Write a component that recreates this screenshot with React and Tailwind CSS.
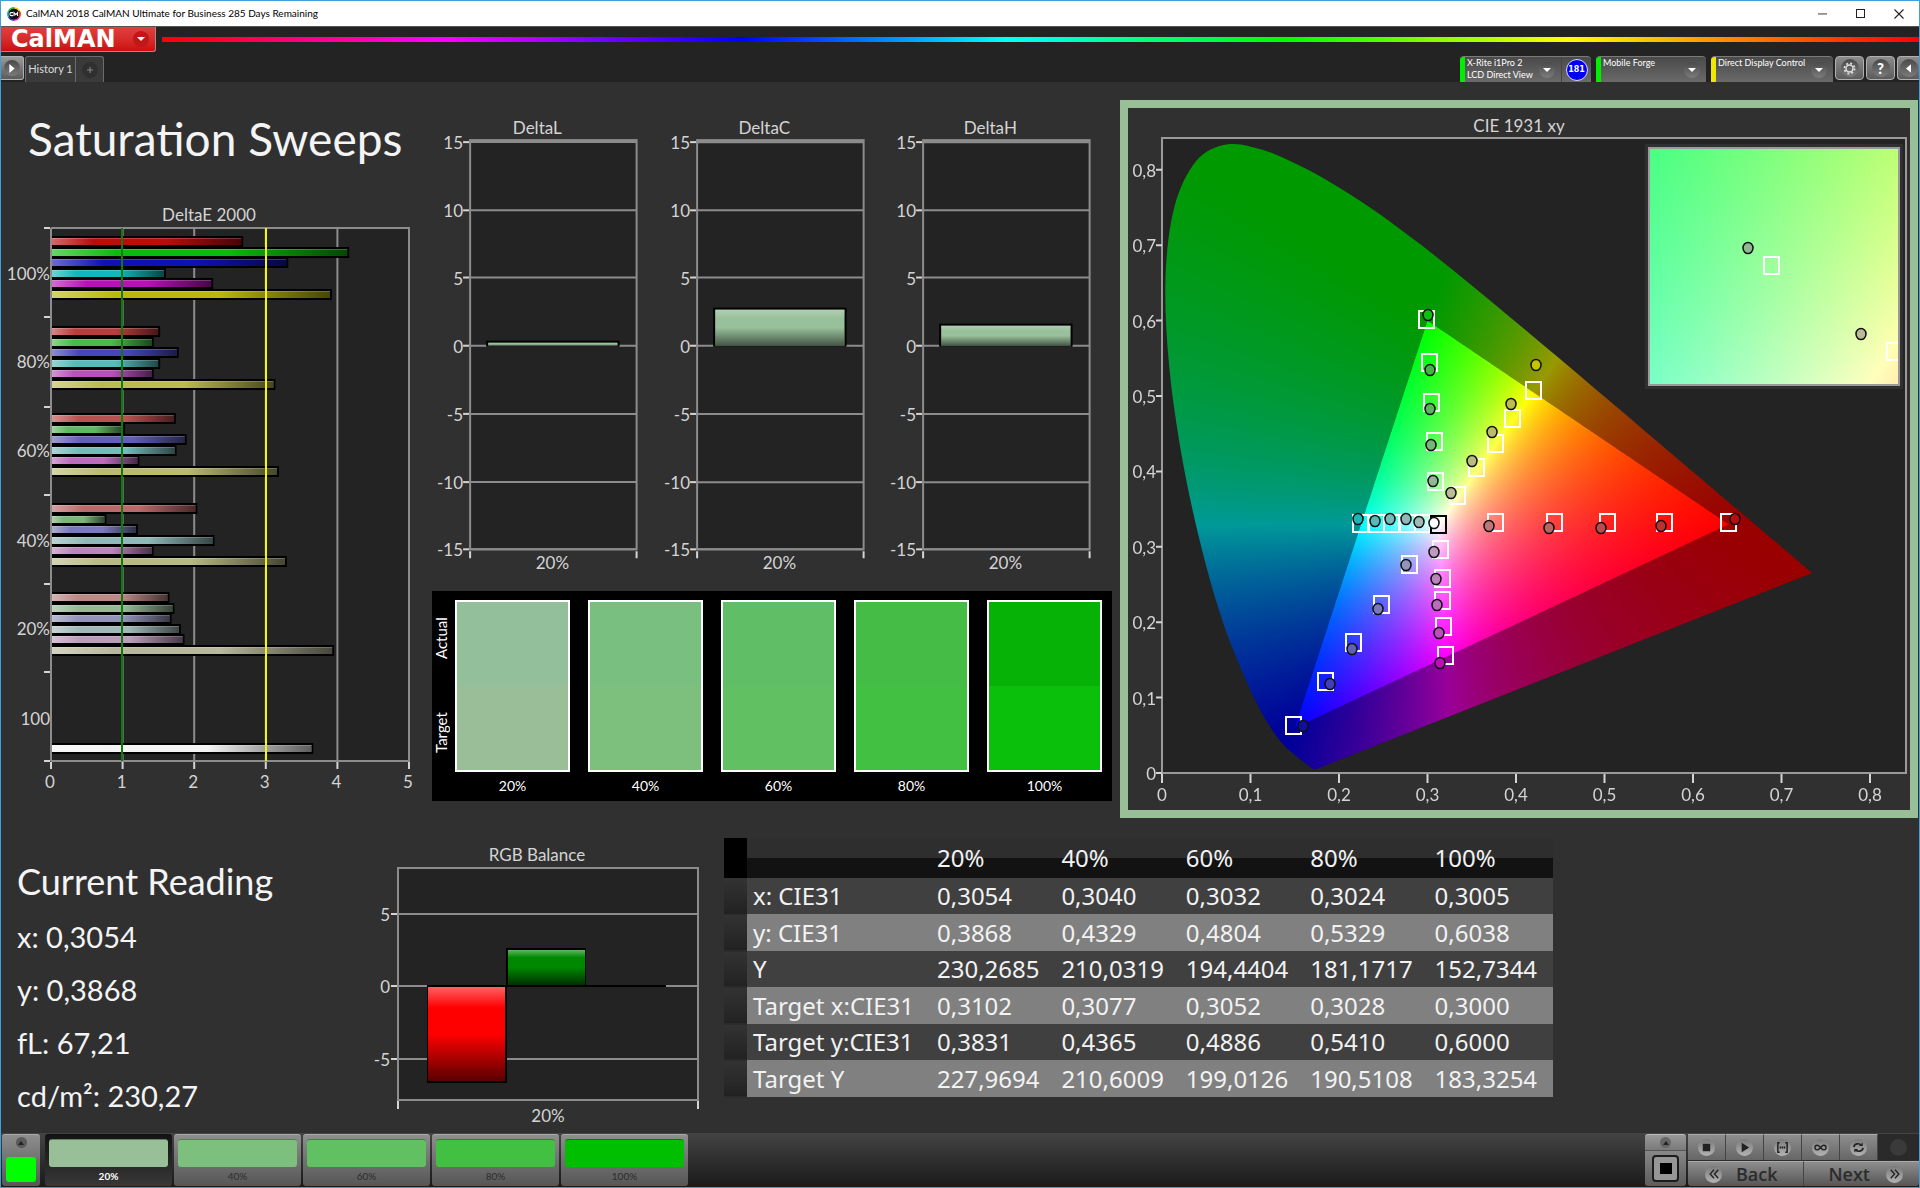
import { useEffect, useRef } from "react";

const LEVELS = ["20%", "40%", "60%", "80%", "100%"];

const DELTA_E = [
  { label: "100%", y: 41, labelY: 80, values: [2.67, 4.15, 3.3, 1.59, 2.25, 3.91], colors: ["#b90c0c", "#0db90d", "#1010b9", "#10b9b9", "#b910b9", "#b9b90c"] },
  { label: "80%", y: 131, labelY: 168, values: [1.51, 1.42, 1.77, 1.51, 1.42, 3.12], colors: ["#bb3c3c", "#48bb48", "#4646bb", "#54bbbb", "#bb50bb", "#bbbb50"] },
  { label: "60%", y: 218, labelY: 257, values: [1.73, 1.02, 1.88, 1.74, 1.22, 3.17], colors: ["#bb5050", "#62b862", "#6060b8", "#78baba", "#bb6cbb", "#bbbb70"] },
  { label: "40%", y: 308, labelY: 347, values: [2.03, 0.76, 1.2, 2.27, 1.42, 3.28], colors: ["#bb6a6a", "#7ab57a", "#7a7ab8", "#90b8b8", "#bb84bb", "#b9b984"] },
  { label: "20%", y: 397, labelY: 435, values: [1.64, 1.71, 1.67, 1.8, 1.85, 3.94], colors: ["#bc8888", "#96b896", "#9494bb", "#a2b8b8", "#bb9cbb", "#b8b89c"] },
  { label: "100", y: 548, labelY: 525, values: [3.65], colors: ["#f4f4f4"] },
];

const SWATCHES = [
  { level: "20%", actual: "#93c09a", target: "#9abe97" },
  { level: "40%", actual: "#79c080", target: "#7dc07d" },
  { level: "60%", actual: "#60bf66", target: "#61c061" },
  { level: "80%", actual: "#45bc45", target: "#42c042" },
  { level: "100%", actual: "#05b205", target: "#0ac00a" },
];

const HISTORY = [
  { level: "20%", color: "#98bf97" },
  { level: "40%", color: "#7dc07d" },
  { level: "60%", color: "#61c061" },
  { level: "80%", color: "#42c042" },
  { level: "100%", color: "#00bf00" },
];

const TABLE = [
  ["x: CIE31", "0,3054", "0,3040", "0,3032", "0,3024", "0,3005"],
  ["y: CIE31", "0,3868", "0,4329", "0,4804", "0,5329", "0,6038"],
  ["Y", "230,2685", "210,0319", "194,4404", "181,1717", "152,7344"],
  ["Target x:CIE31", "0,3102", "0,3077", "0,3052", "0,3028", "0,3000"],
  ["Target y:CIE31", "0,3831", "0,4365", "0,4886", "0,5410", "0,6000"],
  ["Target Y", "227,9694", "210,6009", "199,0126", "190,5108", "183,3254"],
];

const LOCUS = [
  [0.1741, 0.005], [0.1714, 0.0051], [0.1689, 0.0069], [0.1644, 0.0109], [0.1566, 0.0177], [0.144, 0.0297],
  [0.1355, 0.0399], [0.1241, 0.0578], [0.1096, 0.0868], [0.0913, 0.1327], [0.0687, 0.2007], [0.0454, 0.295],
  [0.0235, 0.4127], [0.0082, 0.5384], [0.0039, 0.6548], [0.0139, 0.7502], [0.0389, 0.812], [0.0743, 0.8338],
  [0.1142, 0.8262], [0.1547, 0.8059], [0.1929, 0.7816], [0.2296, 0.7543], [0.2658, 0.7243], [0.3016, 0.6923],
  [0.3373, 0.6589], [0.3731, 0.6245], [0.4087, 0.5896], [0.4441, 0.5547], [0.4788, 0.5202], [0.5125, 0.4866],
  [0.5448, 0.4544], [0.5752, 0.4242], [0.6029, 0.3965], [0.627, 0.3725], [0.6658, 0.334], [0.6915, 0.3083],
  [0.719, 0.2809], [0.7347, 0.2653],
];

const TARGETS = [
  [299, 212], [302, 255], [304, 295], [307, 334], [308, 374],
  [406, 283], [385, 311], [368, 336], [349, 360], [330, 388],
  [233, 416], [249, 416], [264, 416], [280, 416], [295, 416],
  [368, 415], [427, 415], [480, 415], [537, 415], [601, 415],
  [313, 442], [315, 471], [315, 493], [316, 519], [318, 548],
  [282, 457], [254, 497], [226, 535], [198, 574], [166, 618],
];

const READINGS = [
  [300, 207, "#0dc00d"], [302, 262, "#42b542"], [302, 301, "#5cb45c"], [303, 337, "#76b676"], [305, 373, "#92b892"],
  [408, 257, "#c4c400"], [383, 296, "#bdbd4a"], [364, 324, "#bcbc68"], [344, 353, "#bbbb80"], [323, 385, "#bbbb98"],
  [230, 411, "#18b8b8"], [247, 413, "#54bbbb"], [262, 411, "#78baba"], [278, 411, "#90b8b8"], [291, 414, "#a2b8b8"],
  [361, 418, "#bc7878"], [421, 420, "#bb6262"], [473, 420, "#bb4a4a"], [533, 418, "#bb3030"], [607, 411, "#b90c0c"],
  [306, 444, "#bb9cbb"], [308, 471, "#bb84bb"], [309, 497, "#bb6cbb"], [311, 525, "#bb50bb"], [312, 555, "#b910b9"],
  [278, 457, "#9494bb"], [250, 501, "#7a7ab8"], [224, 541, "#6060b8"], [202, 576, "#4040b8"], [175, 618, "#1010a0"],
];

const CIE = { left: 34, bottom: 665, sx: 885, sy: 754 };
const cieX = (x) => CIE.left + x * CIE.sx;
const cieY = (y) => CIE.bottom - y * CIE.sy;

function smoothPath(points) {
  let d = `M${points[0][0]} ${points[0][1]}`;
  for (let i = 0; i < points.length - 1; i++) {
    const a = points[Math.max(i - 1, 0)];
    const b = points[i];
    const c = points[i + 1];
    const e = points[Math.min(i + 2, points.length - 1)];
    d += `C${b[0] + (c[0] - a[0]) / 6} ${b[1] + (c[1] - a[1]) / 6} ${c[0] - (e[0] - b[0]) / 6} ${c[1] - (e[1] - b[1]) / 6} ${c[0]} ${c[1]}`;
  }
  return d + "Z";
}

const LOCUS_PATH = smoothPath(LOCUS.map(([x, y]) => [cieX(x), cieY(y)]));

/* Paints the chromaticity plane between two xy corners; colours outside Rec.709 are dimmed. */
function ChromaField({ width, height, x0, x1, y0, y1 }) {
  const ref = useRef(null);
  useEffect(() => {
    const canvas = ref.current;
    const w = canvas.width;
    const h = canvas.height;
    const ctx = canvas.getContext("2d");
    const image = ctx.createImageData(w, h);
    for (let j = 0; j < h; j++) {
      const y = Math.max(y1 - ((j + 0.5) / h) * (y1 - y0), 0.0001);
      for (let i = 0; i < w; i++) {
        const x = x0 + ((i + 0.5) / w) * (x1 - x0);
        const X = x / y;
        const Z = (1 - x - y) / y;
        const r = 3.2406 * X - 1.5372 - 0.4986 * Z;
        const g = -0.9689 * X + 1.8758 + 0.0415 * Z;
        const b = 0.0557 * X - 0.204 + 1.057 * Z;
        const k = (Math.min(r, g, b) < 0 ? 153 : 255) / Math.max(r, g, b);
        const o = (j * w + i) * 4;
        image.data[o] = Math.max(r, 0) * k;
        image.data[o + 1] = Math.max(g, 0) * k;
        image.data[o + 2] = Math.max(b, 0) * k;
        image.data[o + 3] = 255;
      }
    }
    ctx.putImageData(image, 0, 0);
  }, [x0, x1, y0, y1]);
  return <canvas ref={ref} width={width * 2} height={height * 2} className="block h-full w-full" />;
}

function Target({ x, y, black }) {
  return <rect x={x - 8} y={y - 9} width="15" height="17" fill="none" stroke={black ? "#000" : "#fff"} strokeWidth="2" />;
}

function Reading({ x, y, color }) {
  return <ellipse cx={x} cy={y} rx="5" ry="5.5" fill={color} stroke="#111" strokeWidth="1.5" />;
}

function CieChart() {
  return (
    <svg viewBox="0 0 782 702" className="block h-auto w-full font-[Lato,sans-serif] text-[17px]" fill="#d4d4d4" role="img" aria-label="CIE 1931 xy">
      <clipPath id="locus"><path d={LOCUS_PATH} /></clipPath>
      <clipPath id="inset"><rect x="521" y="40" width="250" height="237" /></clipPath>
      <text x="391" y="24" textAnchor="middle">CIE 1931 xy</text>
      <rect x="34" y="30" width="744" height="635" fill="#232323" stroke="#9a9a9a" strokeWidth="2" />
      <g clipPath="url(#locus)">
        <foreignObject x={cieX(0)} y={cieY(0.84)} width={0.74 * CIE.sx} height={0.84 * CIE.sy}>
          <ChromaField width={655} height={633} x0={0} x1={0.74} y0={0} y1={0.84} />
        </foreignObject>
      </g>
      {[0, 1, 2, 3, 4, 5, 6, 7, 8].map((i) => (
        <g key={i}>
          <path d={`M${cieX(i / 10)} 666v9M34 ${cieY(i / 10)}h-6`} stroke="#d4d4d4" strokeWidth="2" />
          <text x={cieX(i / 10)} y="693" textAnchor="middle">{i ? `0,${i}` : "0"}</text>
          <text x="28" y={cieY(i / 10) + 7} textAnchor="end">{i ? `0,${i}` : "0"}</text>
        </g>
      ))}
      {TARGETS.map(([x, y]) => <Target key={`${x}-${y}`} x={x} y={y} />)}
      <Target x={311} y={417} black />
      {READINGS.map(([x, y, c]) => <Reading key={`${x}-${y}`} x={x} y={y} color={c} />)}
      <Reading x={306} y={415} color="#fff" />
      <rect x="517" y="36" width="258" height="245" fill="#303030" />
      <g clipPath="url(#inset)">
        <foreignObject x="521" y="40" width="250" height="237">
          <ChromaField width={250} height={237} x0={0.2852} x1={0.3362} y0={0.3581} y1={0.4081} />
        </foreignObject>
        <Target x={644} y={158} />
        <Target x={767} y={244} />
        <Reading x={620} y={140} color="#92b892" />
        <Reading x={733} y={226} color="#bbbb98" />
      </g>
      <rect x="521" y="40" width="250" height="237" fill="none" stroke="#9a9a9a" strokeWidth="2" />
    </svg>
  );
}

function DeltaEChart() {
  const x = (v) => 50 + v * 71.6;
  return (
    <svg viewBox="0 0 431 600" className="block h-auto w-full font-[Lato,sans-serif] text-[17px]" fill="#d4d4d4" role="img" aria-label="DeltaE 2000">
      <defs>
        <linearGradient id="barShade">
          <stop offset="0" stopColor="#fff" stopOpacity=".38" />
          <stop offset=".22" stopColor="#fff" stopOpacity="0" />
          <stop offset=".6" stopColor="#000" stopOpacity="0" />
          <stop offset="1" stopColor="#000" stopOpacity=".62" />
        </linearGradient>
      </defs>
      <text x="208" y="21" textAnchor="middle">DeltaE 2000</text>
      <rect x="50" y="28" width="358" height="533" fill="#232323" />
      {[0, 1, 2, 3, 4, 5].map((v) => (
        <g key={v}>
          <path d={`M${x(v)} 28V561`} stroke="#8c8c8c" strokeWidth="2" />
          <path d={`M${x(v)} 562v7`} stroke="#d4d4d4" strokeWidth="2" />
          <text x={x(v) - 1} y="588" textAnchor="middle">{v}</text>
        </g>
      ))}
      <path d="M50 28H409M50 561H409" stroke="#8c8c8c" strokeWidth="2" />
      {[28, 117, 207, 295, 384, 472, 561].map((y) => <path key={y} d={`M43 ${y}h6`} stroke="#d4d4d4" strokeWidth="2" />)}
      {DELTA_E.map((group) => (
        <g key={group.label}>
          <text x="49" y={group.labelY} textAnchor="end">{group.label}</text>
          {group.values.map((v, i) => {
            const y = Math.round(group.y + i * 10.5);
            return (
              <g key={i}>
                <rect x="51" y={y - 5} width={v * 71.6} height="11" fill="#000" />
                <rect x="51" y={y - 3} width={v * 71.6 - 2} height="7" fill={group.colors[i]} />
                <rect x="51" y={y - 3} width={v * 71.6 - 2} height="7" fill="url(#barShade)" />
                <rect x="51" y={y - 3} width={v * 71.6 - 2} height="1" fill="#fff" opacity=".2" />
              </g>
            );
          })}
        </g>
      ))}
      <path d="M121 28V561" stroke="#0a7d0a" strokeWidth="2" />
      <path d="M265 28V561" stroke="#f6f60a" strokeWidth="2" />
    </svg>
  );
}

function DeltaChart({ title, value }) {
  const y = (v) => 245 - v * 13.55;
  const top = Math.round(y(value));
  return (
    <svg viewBox="0 0 226 490" className="block h-auto w-full font-[Lato,sans-serif] text-[17px]" fill="#d4d4d4" role="img" aria-label={title}>
      <defs>
        <linearGradient id="columnShade" x2="0" y2="1">
          <stop offset="0" stopColor="#fff" stopOpacity=".25" />
          <stop offset=".25" stopColor="#fff" stopOpacity="0" />
          <stop offset=".5" stopColor="#000" stopOpacity="0" />
          <stop offset="1" stopColor="#000" stopOpacity=".55" />
        </linearGradient>
      </defs>
      <text x="105" y="34" textAnchor="middle">{title}</text>
      <rect x="38" y="40" width="166" height="408" fill="#232323" stroke="#8c8c8c" strokeWidth="2" />
      {[15, 10, 5, 0, -5, -10, -15].map((v) => (
        <g key={v}>
          <path d={`M38 ${Math.round(y(v))}h166`} stroke="#8c8c8c" strokeWidth="2" />
          <path d={`M31 ${Math.round(y(v))}h6`} stroke="#d4d4d4" strokeWidth="2" />
          <text x="31" y={Math.round(y(v)) + 7} textAnchor="end">{v}</text>
        </g>
      ))}
      <path d="M38 450v7M204 450v7" stroke="#d4d4d4" strokeWidth="2" />
      <rect x="54" y={top - 1} width="133" height={247 - top} fill="#000" />
      <rect x="56" y={top + 1} width="129" height={244 - top} fill="#98c09a" />
      <rect x="56" y={top + 1} width="129" height={244 - top} fill="url(#columnShade)" />
      <text x="120" y="468" textAnchor="middle">20%</text>
    </svg>
  );
}

function RgbBalance() {
  return (
    <svg viewBox="0 0 364 290" className="block h-auto w-full font-[Lato,sans-serif] text-[17px]" fill="#d4d4d4" role="img" aria-label="RGB Balance">
      <defs>
        <linearGradient id="balanceShade" x2="0" y2="1">
          <stop offset="0" stopColor="#fff" stopOpacity=".38" />
          <stop offset=".22" stopColor="#fff" stopOpacity="0" />
          <stop offset=".5" stopColor="#000" stopOpacity="0" />
          <stop offset="1" stopColor="#000" stopOpacity=".65" />
        </linearGradient>
      </defs>
      <text x="177" y="21" textAnchor="middle">RGB Balance</text>
      <rect x="38" y="28" width="300" height="232" fill="#232323" stroke="#8c8c8c" strokeWidth="2" />
      {[[74, "5"], [146, "0"], [219, "-5"]].map(([y, label]) => (
        <g key={label}>
          <path d={`M38 ${y}h300`} stroke="#8c8c8c" strokeWidth="2" />
          <path d={`M31 ${y}h6`} stroke="#d4d4d4" strokeWidth="2" />
          <text x="30" y={y + 7} textAnchor="end">{label}</text>
        </g>
      ))}
      <path d="M38 261v8M338 261v8" stroke="#d4d4d4" strokeWidth="2" />
      <rect x="67" y="145" width="80" height="98" fill="#000" />
      <rect x="68" y="147" width="77" height="94" fill="#f00" />
      <rect x="68" y="147" width="77" height="94" fill="url(#balanceShade)" />
      <rect x="146" y="108" width="80" height="39" fill="#000" />
      <rect x="148" y="110" width="77" height="35" fill="#008800" />
      <rect x="148" y="110" width="77" height="35" fill="url(#balanceShade)" />
      <rect x="226" y="145" width="80" height="2" fill="#000" />
      <text x="188" y="282" textAnchor="middle">20%</text>
    </svg>
  );
}

const GLOSS = "bg-linear-to-b from-[#8e8e8e] to-[#565656]";
const DISC = "grid place-items-center rounded-full bg-linear-to-b from-[#4a4a4a] to-[#7c7c7c]";
const SILVER_DISC = "grid size-[17px] place-items-center rounded-full bg-linear-to-b from-[#7a7a7a] to-[#b4b4b4]";

function Caret() {
  return <svg viewBox="0 0 8 4" className="h-1 w-2"><path d="M0 0h8L4 4z" fill="#fff" /></svg>;
}

function Device({ lines, strip, width, children }) {
  return (
    <div className={`flex h-[26px] overflow-hidden rounded-t-[4px] border-t border-[#7a7a7a] bg-linear-to-b from-[#4a4a4a] to-[#6a6a6a] ${width}`}>
      <button className="flex min-w-0 flex-1 text-left">
        <span className={`h-full w-[5px] ${strip}`} />
        <span className="min-w-0 flex-1 pl-[2px] text-[9px] leading-[12px] whitespace-nowrap text-white">
          {lines.map((line) => <span key={line} className="block">{line}</span>)}
        </span>
        <span className={`mt-[5px] mr-[6px] size-4 shrink-0 ${DISC}`}><Caret /></span>
      </button>
      {children}
    </div>
  );
}

function IconButton({ label, children }) {
  return (
    <button aria-label={label} className="grid h-6 w-[29px] place-items-center rounded-[4px] border border-[#b0b0b0] bg-linear-to-b from-[#8c8c8c] to-[#5c5c5c]">
      <span className={`size-[18px] ${DISC}`}>{children}</span>
    </button>
  );
}

function TitleBar() {
  return (
    <div className="flex h-[25px] items-center bg-white pl-[6px]">
      <svg viewBox="0 0 14 14" className="size-[14px]">
        <circle cx="7" cy="7" r="6" fill="#111" />
        <g fill="none" strokeWidth="1.5">
          <path d="M7 .8A6.2 6.2 0 0 1 12.4 4" stroke="#f0d020" />
          <path d="M12.4 4A6.2 6.2 0 0 1 12.4 10" stroke="#f04020" />
          <path d="M12.4 10A6.2 6.2 0 0 1 7 13.2" stroke="#e020c0" />
          <path d="M7 13.2A6.2 6.2 0 0 1 1.6 10" stroke="#3030e0" />
          <path d="M1.6 10A6.2 6.2 0 0 1 1.6 4" stroke="#20b0d0" />
          <path d="M1.6 4A6.2 6.2 0 0 1 7 .8" stroke="#30c030" />
        </g>
        <path d="M6 5.6H4a1 1 0 0 0-1 1v1a1 1 0 0 0 1 1h2M7 9V5.6l1.8 2 1.8-2V9" fill="none" stroke="#fff" strokeWidth="1.1" />
      </svg>
      <span className="ml-[5px] flex-1 text-[10px] text-black">CalMAN 2018 CalMAN Ultimate for Business 285 Days Remaining</span>
      <div className="flex">
        <button aria-label="Minimize" className="grid h-6 w-[38px] place-items-center"><svg viewBox="0 0 10 10" className="size-[9px]"><path d="M0 5.5h10" stroke="#222" /></svg></button>
        <button aria-label="Maximize" className="grid h-6 w-[38px] place-items-center"><svg viewBox="0 0 10 10" className="size-[9px]"><path d="M.5.5h9v9h-9z" fill="none" stroke="#222" strokeWidth="1.2" /></svg></button>
        <button aria-label="Close" className="grid h-6 w-[40px] place-items-center"><svg viewBox="0 0 10 10" className="size-[10px]"><path d="M.5.5l9 9M9.5.5l-9 9" stroke="#222" strokeWidth="1.1" /></svg></button>
      </div>
    </div>
  );
}

function Header() {
  return (
    <header className="border-t border-[#555] bg-[#232323]">
      <div className="flex h-[25px]">
        <button aria-label="CalMAN menu" className="flex h-[25px] w-[155px] items-center justify-between rounded-br-[3px] border-r border-b border-[#a88] bg-linear-to-b from-[#e04040] to-[#cc0c0c] pr-1.5 pl-[10px]">
          <span className="font-['DejaVu_Sans',sans-serif] text-[24px] leading-6 font-bold text-white">CalMAN</span>
          <span className="grid size-4 place-items-center rounded-full bg-[#c01818]"><Caret /></span>
        </button>
        <div className="mt-[10px] ml-[6px] h-[5px] flex-1 bg-[linear-gradient(to_right,#f00_0%,#f0f_16%,#00f_33%,#0ff_48%,#0f0_64%,#ff0_80%,#f00_100%)]" />
      </div>
      <div className="mt-1 flex h-[26px] items-start justify-between">
        <div className="flex">
          <button aria-label="Expand" className="grid h-6 w-[23px] place-items-center rounded-r-[3px] border border-l-0 border-[#b0b0b0] bg-linear-to-b from-[#9a9a9a] to-[#5c5c5c]">
            <span className={`size-4 ${DISC}`}><svg viewBox="0 0 6 10" className="h-[9px] w-[6px]"><path d="M0 0v10l6-5z" fill="#fff" /></svg></span>
          </button>
          <div className="ml-px flex h-[26px] w-[79px] rounded-t-[3px] border border-b-0 border-[#6c6c6c] bg-[#3a3a3a]">
            <button className="flex-1 border-r border-[#6c6c6c] text-[11px] text-[#dcdcdc]">History 1</button>
            <button aria-label="Add history" className="grid w-[27px] place-items-center">
              <span className="grid size-4 place-items-center rounded-full bg-[#303030]"><svg viewBox="0 0 6 6" className="size-[6px]"><path d="M3 0v6M0 3h6" stroke="#888" /></svg></span>
            </button>
          </div>
        </div>
        <div className="flex">
          <Device lines={["X-Rite i1Pro 2", "LCD Direct View"]} strip="bg-[#0e0]" width="w-[131px]">
            <span className="grid w-[30px] place-items-center border-l border-[#444]">
              <span className="grid size-[22px] place-items-center rounded-full border border-[#d8d8ff] bg-[#0000f4] font-['DejaVu_Sans',sans-serif] text-[8px] font-bold text-white">181</span>
            </span>
          </Device>
          <div className="ml-[5px]"><Device lines={["Mobile Forge"]} strip="bg-[#0e0]" width="w-[110px]" /></div>
          <div className="ml-[5px]"><Device lines={["Direct Display Control"]} strip="bg-[#f0e800]" width="w-[122px]" /></div>
          <div className="ml-0.5 flex gap-[2px]">
            <IconButton label="Settings">
              <svg viewBox="0 0 14 14" className="size-[13px]"><circle cx="7" cy="7" r="3.8" fill="none" stroke="#ddd" strokeWidth="1.6" /><circle cx="7" cy="7" r="5.5" fill="none" stroke="#ddd" strokeWidth="1.8" strokeDasharray="2.16 2.16" /></svg>
            </IconButton>
            <IconButton label="Help"><span className="text-[15px] leading-4 font-black text-white">?</span></IconButton>
            <button aria-label="Collapse" className="grid h-6 w-[22px] place-items-center rounded-l-[4px] border border-r-0 border-[#b0b0b0] bg-linear-to-b from-[#8c8c8c] to-[#5c5c5c]">
              <span className={`size-[18px] ${DISC}`}><svg viewBox="0 0 6 10" className="h-[9px] w-[5px]"><path d="M6 0v10L0 5z" fill="#fff" /></svg></span>
            </button>
          </div>
        </div>
      </div>
    </header>
  );
}

function SwatchPanel() {
  return (
    <div className="flex h-[210px] gap-[18px] bg-black pr-[10px] text-white">
      <div className="flex w-[5px] flex-col pt-[9px] pb-7 text-[15px]">
        <span className="flex h-[76px] w-[18px] rotate-180 items-center justify-center [writing-mode:vertical-rl]">Actual</span>
        <span className="flex h-[86px] w-[18px] rotate-180 items-center justify-center pb-7 [writing-mode:vertical-rl]">Target</span>
      </div>
      {SWATCHES.map((s) => (
        <figure key={s.level} className="flex flex-1 flex-col pt-[9px] text-center">
          <div className="h-[172px] border-2 border-white">
            <div className="h-1/2" style={{ backgroundColor: s.actual }} />
            <div className="h-1/2" style={{ backgroundColor: s.target }} />
          </div>
          <figcaption className="text-[14px] leading-[28px]">{s.level}</figcaption>
        </figure>
      ))}
    </div>
  );
}

function DataTable() {
  return (
    <table className="w-full table-fixed border-collapse text-left font-['Noto_Sans',sans-serif] text-[24px] leading-7 text-[#f2f2f2]">
      <colgroup>
        <col className="w-[23px]" />
        <col className="w-[184px]" />
        {LEVELS.map((l) => <col key={l} />)}
      </colgroup>
      <thead>
        <tr className="h-10">
          <td className="bg-black" />
          <td className="bg-linear-to-b from-[#2e2e2e] from-50% to-[#121212] to-50%" />
          {LEVELS.map((l) => <th key={l} scope="col" className="bg-linear-to-b from-[#2e2e2e] from-50% to-[#121212] to-50% pl-[6px] font-normal">{l}</th>)}
        </tr>
      </thead>
      <tbody>
        {TABLE.map(([label, ...cells], i) => (
          <tr key={label} className={i % 2 ? "h-[37px] bg-[#808080]" : "h-9 bg-[#404040]"}>
            <td className="border-b border-[#2c2c2c] bg-linear-to-b from-[#333] to-[#222]" />
            <th scope="row" className="pl-[6px] font-normal whitespace-nowrap">{label}</th>
            {cells.map((c, j) => <td key={j} className="pl-[6px] whitespace-nowrap">{c}</td>)}
          </tr>
        ))}
      </tbody>
    </table>
  );
}

const TOOLS = [
  ["Stop", <path key="p" d="M3 3h8v8H3z" fill="#222" />],
  ["Play", <path key="p" d="M4 2v10l8-5z" fill="#222" />],
  ["Read series", <g key="p"><path d="M4 2H2v10h2M10 2h2v10h-2" fill="none" stroke="#222" strokeWidth="1.6" /><path d="M4 7h1.6M6.2 7h1.6M8.4 7H10" stroke="#222" strokeWidth="2" /></g>],
  ["Read continuously", <path key="p" d="M7 7C5.5 5 4.6 4.5 3.5 4.5a2.5 2.5 0 0 0 0 5C4.6 9.5 5.5 9 7 7s2.4-2.5 3.5-2.5a2.5 2.5 0 0 1 0 5C9.4 9.5 8.5 9 7 7z" fill="none" stroke="#222" strokeWidth="1.5" />],
  ["Refresh", <g key="p" fill="none" stroke="#222" strokeWidth="1.8"><path d="M2 6.5A4.5 4 0 0 1 10 4.5M12 7.5A4.5 4 0 0 1 4 9.5" /><path d="M11.5 1.5v4h-4zM2.5 12.5v-4h4z" fill="#222" stroke="none" /></g>],
];

function Footer() {
  return (
    <footer className="flex h-[54px] items-start justify-between bg-linear-to-b from-[#444] to-[#1a1a1a] pt-px">
      <div className="flex">
        <button aria-label="Expand swatches" className={`ml-px flex h-[52px] w-[38px] flex-col items-center rounded-[3px] border-t border-[#aaa] ${GLOSS}`}>
          <span className="mt-0.5 grid size-[11px] place-items-center rounded-full bg-[#5a5a5a]"><svg viewBox="0 0 6 4" className="h-1 w-1.5"><path d="M0 4h6L3 0z" fill="#222" /></svg></span>
          <span className="mt-[9px] h-[25px] w-[30px] rounded-[3px] bg-[#0f0]" />
        </button>
        <div className="ml-[5px] flex gap-[2px]">
          {HISTORY.map((h, i) => (
            <button key={h.level} className={`flex h-[52px] w-[127px] flex-col items-center rounded-[3px] border-t pt-1 text-[10px] ${i === 0 ? "border-[#111] bg-linear-to-b from-[#141414] to-[#383838] font-bold text-white" : "border-[#aaa] bg-linear-to-b from-[#8e8e8e] to-[#565656] text-[#2c2c2c]"}`}>
              <span className="h-[30px] w-[119px] rounded-[3px] border-t border-[#0005]" style={{ backgroundColor: h.color }} />
              <span className="leading-[19px]">{h.level}</span>
            </button>
          ))}
        </div>
      </div>
      <div className="flex gap-0.5">
        <div className="w-[41px]">
          <button aria-label="Expand controls" className="grid h-4 w-full place-items-center rounded-t-[3px] border-t border-[#bbb] bg-linear-to-b from-[#999] to-[#7a7a7a]">
            <span className="grid size-[11px] place-items-center rounded-full bg-[#666]"><svg viewBox="0 0 6 4" className="h-1 w-1.5"><path d="M0 4h6L3 0z" fill="#222" /></svg></span>
          </button>
          <button aria-label="Pattern window" className="grid h-9 w-full place-items-center rounded-b-[3px] border-t border-[#555] bg-linear-to-b from-[#888] to-[#5c5c5c]">
            <span className="grid size-[27px] place-items-center rounded-[4px] border-2 border-[#1c1c1c] bg-[#969696]"><span className="h-[11px] w-3 bg-black" /></span>
          </button>
        </div>
        <div className="w-[231px]">
          <div className="flex h-[26px]">
            {TOOLS.map(([label, icon]) => (
              <button key={label} aria-label={label} className="grid h-[26px] w-[38px] place-items-center border-t border-r border-t-[#aaa] border-r-[#444] bg-linear-to-b from-[#8e8e8e] to-[#666]">
                <span className={SILVER_DISC}><svg viewBox="0 0 14 14" className="size-[13px]">{icon}</svg></span>
              </button>
            ))}
            <span className="grid flex-1 place-items-center bg-[#2a2a2a]"><span className="size-[17px] rounded-full bg-[#3a3a3a]" /></span>
          </div>
          <div className="mt-px flex h-[25px] font-['Open_Sans',sans-serif] text-[18px] font-semibold text-[#2c2c2c]">
            <button className={`flex w-1/2 items-center gap-[14px] rounded-bl-[3px] border-t border-r border-t-[#aaa] border-r-[#444] pl-[17px] leading-6 ${GLOSS}`}>
              <span className={SILVER_DISC}><svg viewBox="0 0 14 14" className="size-3"><path d="M7 2L2.5 7 7 12M12 2L7.5 7l4.5 5" fill="none" stroke="#222" strokeWidth="1.6" /></svg></span>
              Back
            </button>
            <button className={`flex w-1/2 items-center justify-end gap-[16px] rounded-br-[3px] border-t border-[#aaa] pr-[16px] leading-6 ${GLOSS}`}>
              Next
              <span className={SILVER_DISC}><svg viewBox="0 0 14 14" className="size-3"><path d="M2 2l4.5 5L2 12M7 2l4.5 5L7 12" fill="none" stroke="#222" strokeWidth="1.6" /></svg></span>
            </button>
          </div>
        </div>
      </div>
    </footer>
  );
}

export default function App() {
  return (
    <div className="flex min-h-screen flex-col border border-[#3f9fdc] bg-[#303030] font-[Lato,sans-serif]">
      <TitleBar />
      <Header />
      <main className="flex-1">
        <section className="grid grid-cols-[431fr_688fr_799fr] pt-[18px]">
          <div className="min-w-0">
            <h1 className="h-[100px] pl-[27px] text-[46px] leading-[78px] whitespace-nowrap text-[#f4f4f4]">Saturation Sweeps</h1>
            <DeltaEChart />
          </div>
          <div className="min-w-0 pr-2">
            <div className="grid grid-cols-3">
              <DeltaChart title="DeltaL" value={0.28} />
              <DeltaChart title="DeltaC" value={2.72} />
              <DeltaChart title="DeltaH" value={1.58} />
            </div>
            <SwatchPanel />
          </div>
          <div className="mr-px min-w-0 self-start border-8 border-[#98bf97]">
            <CieChart />
          </div>
        </section>
        <section className="grid grid-cols-[359fr_364fr_829fr_366fr]">
          <div className="pt-[34px] pl-4 text-[29px] leading-[53px] whitespace-nowrap text-[#f4f4f4]">
            <h2 className="text-[36px] leading-[58px]">Current Reading</h2>
            <p>x: 0,3054</p>
            <p>y: 0,3868</p>
            <p>fL: 67,21</p>
            <p>cd/m²: 230,27</p>
          </div>
          <div className="pt-[22px]"><RgbBalance /></div>
          <div className="pt-5"><DataTable /></div>
        </section>
      </main>
      <Footer />
    </div>
  );
}
